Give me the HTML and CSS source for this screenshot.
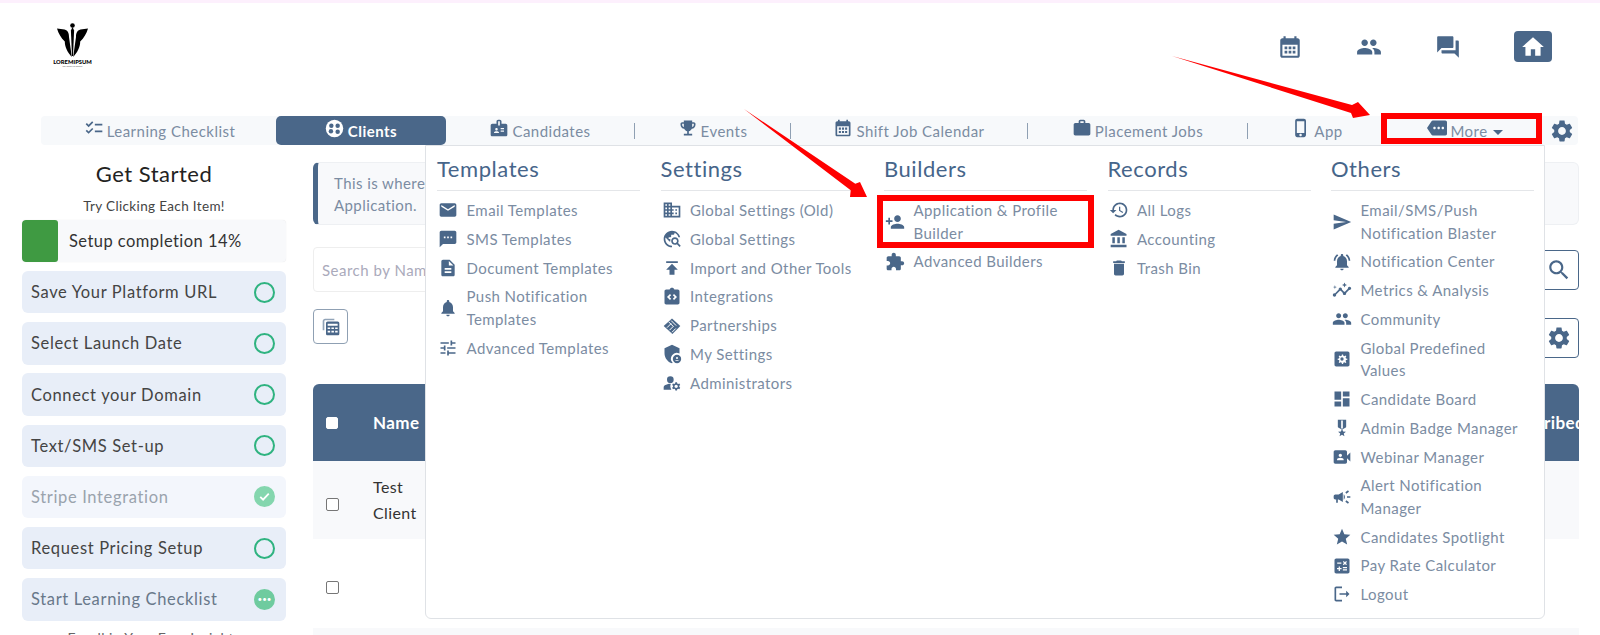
FILE: index.html
```html
<!DOCTYPE html>
<html lang="en">
<head>
<meta charset="utf-8">
<title>Clients</title>
<link rel="stylesheet" href="styles.css">
</head>
<body>
<svg class="defs" width="0" height="0" aria-hidden="true">
<symbol id="i-cal" viewBox="0 0 24 24"><path fill-rule="evenodd" d="M19 4h-1V2h-2v2H8V2H6v2H5C3.9 4 3 4.9 3 6v14c0 1.1.9 2 2 2h14c1.1 0 2-.9 2-2V6c0-1.100-.9-2-2-2zM19 20H5V10h14z"/><path d="M7 11.500h2.500V14H7zM10.750 11.500h2.500V14h-2.500zM14.500 11.500H17V14h-2.500zM7 15.500h2.500V18H7zM10.750 15.500h2.500V18h-2.500zM14.500 15.500H17V18h-2.500z"/></symbol>
<symbol id="i-people" viewBox="0 0 24 24"><path d="M16 11c1.660 0 2.990-1.340 2.990-3S17.660 5 16 5c-1.660 0-3 1.340-3 3s1.340 3 3 3zm-8 0c1.660 0 2.990-1.340 2.990-3S9.660 5 8 5C6.340 5 5 6.340 5 8s1.340 3 3 3zm0 2c-2.330 0-7 1.170-7 3.500V19h14v-2.500c0-2.330-4.670-3.500-7-3.500zm8 0c-.29 0-.62.02-.97.05 1.160.84 1.970 1.970 1.970 3.450V19h6v-2.500c0-2.330-4.670-3.500-7-3.500z"/></symbol>
<symbol id="i-forum" viewBox="0 0 24 24"><path d="M21 6h-2v9H6v2c0 .55.45 1 1 1h11l4 4V7c0-.55-.45-1-1-1zm-4 6V3c0-.55-.45-1-1-1H3c-.55 0-1 .45-1 1v14l4-4h10c.55 0 1-.45 1-1z"/></symbol>
<symbol id="i-home" viewBox="0 0 24 24"><path d="M10 20v-6h4v6h5v-8h3L12 3 2 12h3v8z"/></symbol>
<symbol id="i-gear" viewBox="0 0 24 24"><path d="M19.140 12.940c.04-.3.06-.61.06-.94 0-.32-.02-.64-.07-.94l2.030-1.580c.18-.14.23-.41.12-.61l-1.920-3.320c-.12-.22-.37-.29-.59-.22l-2.390.96c-.5-.38-1.030-.7-1.620-.94l-.36-2.540c-.04-.24-.24-.41-.48-.41h-3.840c-.24 0-.43.17-.47.41l-.36 2.540c-.59.24-1.130.57-1.620.94l-2.390-.96c-.22-.08-.47 0-.59.22L2.740 8.870c-.12.21-.08.47.12.61l2.030 1.580c-.05.3-.09.63-.09.94s.02.64.07.94l-2.030 1.580c-.18.14-.23.41-.12.61l1.920 3.320c.12.22.37.29.59.22l2.390-.96c.5.38 1.030.7 1.620.94l.36 2.540c.05.24.24.41.48.41h3.840c.24 0 .44-.17.47-.41l.36-2.540c.59-.24 1.130-.56 1.620-.94l2.390.96c.22.08.47 0 .59-.22l1.920-3.320c.12-.22.07-.47-.12-.61l-2.010-1.580zM12 15.600c-1.980 0-3.600-1.620-3.600-3.600s1.620-3.600 3.600-3.600 3.600 1.620 3.600 3.600-1.620 3.600-3.600 3.600z"/></symbol>
<symbol id="i-search" viewBox="0 0 24 24"><path d="M15.500 14h-.79l-.28-.27C15.410 12.590 16 11.110 16 9.500 16 5.910 13.090 3 9.500 3S3 5.910 3 9.500 5.910 16 9.500 16c1.610 0 3.090-.59 4.230-1.570l.27.28v.79l5 4.990L20.490 19l-4.990-5zm-6 0C7.010 14 5 11.990 5 9.500S7.010 5 9.500 5 14 7.010 14 9.500 11.990 14 9.500 14z"/></symbol>
<symbol id="i-email" viewBox="0 0 24 24"><path d="M20 4H4c-1.100 0-1.990.9-1.990 2L2 18c0 1.100.9 2 2 2h16c1.100 0 2-.9 2-2V6c0-1.100-.9-2-2-2zm0 4l-8 5-8-5V6l8 5 8-5v2z"/></symbol>
<symbol id="i-sms" viewBox="0 0 24 24"><path d="M20 2H4c-1.100 0-1.990.9-1.990 2L2 22l4-4h14c1.100 0 2-.9 2-2V4c0-1.100-.9-2-2-2zM9 11H7V9h2v2zm4 0h-2V9h2v2zm4 0h-2V9h2v2z"/></symbol>
<symbol id="i-doc" viewBox="0 0 24 24"><path d="M14 2H6c-1.100 0-1.990.9-1.990 2L4 20c0 1.100.89 2 1.990 2H18c1.100 0 2-.9 2-2V8l-6-6zm2 16H8v-2h8v2zm0-4H8v-2h8v2zm-3-5V3.500L18.500 9H13z"/></symbol>
<symbol id="i-bell" viewBox="0 0 24 24"><path d="M12 22c1.100 0 2-.9 2-2h-4c0 1.100.89 2 2 2zm6-6v-5c0-3.070-1.640-5.640-4.500-6.320V4c0-.83-.67-1.500-1.500-1.500s-1.500.67-1.500 1.500v.68C7.630 5.360 6 7.920 6 11v5l-2 2v1h16v-1l-2-2z"/></symbol>
<symbol id="i-tune" viewBox="0 0 24 24"><path d="M3 17v2h6v-2H3zM3 5v2h10V5H3zm10 16v-2h8v-2h-8v-2h-2v6h2zM7 9v2H3v2h4v2h2V9H7zm14 4v-2H11v2h10zm-6-4h2V7h4V5h-4V3h-2v6z"/></symbol>
<symbol id="i-domain" viewBox="0 0 24 24"><path d="M12 7V3H2v18h20V7H12zM6 19H4v-2h2v2zm0-4H4v-2h2v2zm0-4H4V9h2v2zm0-4H4V5h2v2zm4 12H8v-2h2v2zm0-4H8v-2h2v2zm0-4H8V9h2v2zm0-4H8V5h2v2zm10 12h-8v-2h2v-2h-2v-2h2v-2h-2V9h8v10zm-2-8h-2v2h2v-2zm0 4h-2v2h2v-2z"/></symbol>
<symbol id="i-explore" viewBox="0 0 24 24"><path d="M19.300 16.900c.4-.7.7-1.500.7-2.400 0-2.500-2-4.500-4.500-4.500S11 12 11 14.500s2 4.500 4.500 4.500c.9 0 1.700-.3 2.400-.7l3.200 3.200 1.400-1.400-3.200-3.200zm-3.800.1c-1.400 0-2.500-1.100-2.500-2.500s1.100-2.500 2.500-2.500 2.500 1.100 2.500 2.500-1.100 2.500-2.500 2.500zM12 20v2C6.480 22 2 17.520 2 12S6.480 2 12 2c4.840 0 8.870 3.440 9.800 8h-2.070c-.64-2.460-2.400-4.470-4.730-5.410V5c0 1.100-.9 2-2 2h-2v2c0 .55-.45 1-1 1H8v2h2v3H9l-4.790-4.790C4.080 10.790 4 11.380 4 12c0 4.410 3.590 8 8 8z"/></symbol>
<symbol id="i-publish" viewBox="0 0 24 24"><path d="M5 4v2h14V4H5zm0 10h4v6h6v-6h4l-7-7-7 7z"/></symbol>
<symbol id="i-integr" viewBox="0 0 24 24"><path d="M19 3h-4.180C14.400 1.840 13.300 1 12 1s-2.400.84-2.820 2H5c-1.100 0-2 .9-2 2v14c0 1.100.9 2 2 2h14c1.100 0 2-.9 2-2V5c0-1.100-.9-2-2-2zM11 14.170l-1.410 1.420L6 12l3.590-3.590L11 9.830 8.830 12 11 14.170zm3.410 1.420L13 14.170 15.170 12 13 9.830l1.410-1.420L18 12l-3.590 3.590z"/></symbol>
<symbol id="i-hands" viewBox="0 0 24 24"><path d="M12 3l10 9-9.500 9.500L2 12z"/><path class="cut" d="M8 7l5 5M11 5.500l6 6M6 14l5-5M9 17l5-5M12 19.500l4.500-4.500"/></symbol>
<symbol id="i-admin" viewBox="0 0 24 24"><path d="M12 1L3 5v6c0 5.550 3.840 10.740 9 12 .3-.07.6-.16.9-.27A7 7 0 0 1 21 11.500V5z"/><circle cx="18" cy="18" r="5"/><circle class="hole" cx="18" cy="16.800" r="1.200"/><path class="hole" d="M15.500 20.500c.5-1.200 4.500-1.200 5 0z"/></symbol>
<symbol id="i-manage" viewBox="0 0 24 24"><circle cx="10" cy="8" r="4"/><path d="M10.670 13.020c-.22-.01-.44-.02-.67-.02-2.420 0-4.680.67-6.610 1.820-.88.52-1.390 1.500-1.390 2.530V20h9.260c-.79-1.130-1.260-2.510-1.260-4 0-1.070.25-2.070.67-2.980zM20.750 16c0-.22-.03-.42-.06-.63l1.140-1.010-1-1.730-1.450.49c-.32-.27-.68-.48-1.080-.63L18 11h-2l-.3 1.490c-.4.15-.76.36-1.080.63l-1.450-.49-1 1.730 1.140 1.010c-.03.21-.06.41-.06.63s.03.42.06.63l-1.140 1.010 1 1.730 1.450-.49c.32.27.68.48 1.080.63L16 21h2l.3-1.490c.4-.15.76-.36 1.080-.63l1.450.49 1-1.730-1.140-1.010c.03-.21.06-.41.06-.63zM17 18c-1.100 0-2-.9-2-2s.9-2 2-2 2 .9 2 2-.9 2-2 2z"/></symbol>
<symbol id="i-padd" viewBox="0 0 24 24"><path d="M15 12c2.210 0 4-1.790 4-4s-1.790-4-4-4-4 1.790-4 4 1.790 4 4 4zm-9-2V7H4v3H1v2h3v3h2v-3h3v-2H6zm9 4c-2.670 0-8 1.340-8 4v2h16v-2c0-2.660-5.330-4-8-4z"/></symbol>
<symbol id="i-ext" viewBox="0 0 24 24"><path d="M20.500 11H19V7c0-1.100-.9-2-2-2h-4V3.500C13 2.120 11.880 1 10.500 1S8 2.120 8 3.500V5H4c-1.100 0-1.990.9-1.990 2v3.800H3.500c1.490 0 2.700 1.210 2.700 2.700s-1.210 2.700-2.700 2.700H2V20c0 1.100.9 2 2 2h3.800v-1.500c0-1.490 1.210-2.700 2.700-2.700 1.490 0 2.700 1.210 2.700 2.700V22H17c1.100 0 2-.9 2-2v-4h1.500c1.380 0 2.500-1.120 2.500-2.500S21.880 11 20.500 11z"/></symbol>
<symbol id="i-history" viewBox="0 0 24 24"><path d="M13 3c-4.970 0-9 4.030-9 9H1l3.890 3.890.07.14L9 12H6c0-3.870 3.130-7 7-7s7 3.130 7 7-3.130 7-7 7c-1.930 0-3.680-.79-4.940-2.060l-1.420 1.420C8.270 19.990 10.510 21 13 21c4.970 0 9-4.030 9-9s-4.030-9-9-9zm-1 5v5l4.280 2.540.72-1.210-3.500-2.080V8H12z"/></symbol>
<symbol id="i-bank" viewBox="0 0 24 24"><path d="M4 10v7h3v-7H4zm6 0v7h3v-7h-3zM2 22h19v-3H2v3zm14-12v7h3v-7h-3zm-4.500-9L2 6v2h19V6l-9.500-5z"/></symbol>
<symbol id="i-trash" viewBox="0 0 24 24"><path d="M6 19c0 1.100.9 2 2 2h8c1.100 0 2-.9 2-2V7H6v12zM19 4h-3.500l-1-1h-5l-1 1H5v2h14V4z"/></symbol>
<symbol id="i-send" viewBox="0 0 24 24"><path d="M2.010 21L23 12 2.010 3 2 10l15 2-15 2z"/></symbol>
<symbol id="i-bella" viewBox="0 0 24 24"><path d="M7.580 4.080L6.150 2.650C3.750 4.480 2.170 7.300 2.030 10.500h2c.15-2.650 1.510-4.970 3.550-6.420zm12.390 6.420h2c-.15-3.200-1.730-6.020-4.120-7.850l-1.420 1.430c2.020 1.450 3.390 3.770 3.540 6.420zM18 11c0-3.070-1.640-5.640-4.500-6.320V4c0-.83-.67-1.500-1.500-1.500s-1.500.67-1.500 1.500v.68C7.630 5.360 6 7.920 6 11v5l-2 2v1h16v-1l-2-2v-5zm-6 11c.14 0 .27-.01.4-.04.65-.14 1.180-.58 1.440-1.180.1-.24.15-.5.15-.78h-4c.01 1.100.9 2 2.010 2z"/></symbol>
<symbol id="i-insights" viewBox="0 0 24 24"><path d="M21 8c-1.450 0-2.260 1.440-1.930 2.510l-3.550 3.560c-.3-.09-.74-.09-1.040 0l-2.550-2.550C12.270 10.450 11.460 9 10 9c-1.450 0-2.270 1.440-1.930 2.520l-4.560 4.550C2.440 15.740 1 16.550 1 18c0 1.100.9 2 2 2 1.450 0 2.260-1.440 1.930-2.510l4.550-4.560c.3.09.74.09 1.040 0l2.550 2.550C12.730 16.550 13.540 18 15 18c1.450 0 2.270-1.440 1.930-2.520l3.560-3.550c1.070.33 2.510-.48 2.510-1.930 0-1.100-.9-2-2-2z"/><path d="M15 9l.94-2.070L18 6l-2.060-.93L15 3l-.92 2.070L12 6l2.080.93zM3.500 11L4 9l2-.5L4 8l-.5-2L3 8l-2 .5L3 9z"/></symbol>
<symbol id="i-apps" viewBox="0 0 24 24"><path fill-rule="evenodd" d="M19 3H5C3.890 3 3 3.900 3 5v14c0 1.100.89 2 2 2h14c1.110 0 2-.9 2-2V5c0-1.100-.89-2-2-2zM12 6.500l1.300.0.3 1.600 1.200.5 1.400-.9 1 1-.9 1.400.5 1.200 1.600.3v1.400l-1.600.3-.5 1.200.9 1.400-1 1-1.400-.9-1.200.5-.3 1.600h-1.400l-.3-1.600-1.200-.5-1.400.9-1-1 .9-1.400-.5-1.200-1.600-.3v-1.400l1.600-.3.5-1.200-.9-1.400 1-1 1.400.9 1.200-.5.3-1.600zM12 10a2 2 0 1 0 0 4 2 2 0 0 0 0-4z"/></symbol>
<symbol id="i-dash" viewBox="0 0 24 24"><path d="M3 13h8V3H3v10zm0 8h8v-6H3v6zm10 0h8V11h-8v10zm0-18v6h8V3h-8z"/></symbol>
<symbol id="i-medal" viewBox="0 0 24 24"><path d="M17 10.430V2H7v8.430c0 .35.18.68.49.86l4.180 2.510-.99 2.340-3.410.29 2.590 2.240L9.070 22 12 20.230 14.930 22l-.78-3.330 2.590-2.240-3.410-.29-.99-2.340 4.180-2.510c.3-.18.48-.5.48-.86zm-4 1.800l-1 .6-1-.6V3h2v9.230z"/></symbol>
<symbol id="i-video" viewBox="0 0 24 24"><path d="M18 10.480V6c0-1.100-.9-2-2-2H4c-1.100 0-2 .9-2 2v12c0 1.100.9 2 2 2h12c1.100 0 2-.9 2-2v-4.480l4 3.980v-11l-4 3.980zM10 8c1.100 0 2 .9 2 2s-.9 2-2 2-2-.9-2-2 .9-2 2-2zm4 8H6v-.57c0-.81.48-1.530 1.220-1.850.85-.37 1.790-.58 2.780-.58.99 0 1.930.21 2.780.58.74.32 1.220 1.040 1.220 1.850V16z"/></symbol>
<symbol id="i-camp" viewBox="0 0 24 24"><path d="M18 11v2h4v-2h-4zm-2 6.610c.96.71 2.210 1.650 3.200 2.390.4-.53.8-1.070 1.200-1.600-.99-.74-2.240-1.680-3.200-2.400-.4.54-.8 1.080-1.200 1.610zM20.400 5.600c-.4-.53-.8-1.070-1.200-1.600-.99.74-2.240 1.680-3.200 2.400.4.53.8 1.070 1.200 1.600.96-.72 2.210-1.650 3.200-2.400zM4 9c-1.100 0-2 .9-2 2v2c0 1.100.9 2 2 2h1v4h2v-4h1l5 3V6L8 9H4zm11.500 3c0-1.330-.58-2.530-1.500-3.350v6.690c.92-.81 1.500-2.010 1.500-3.340z"/></symbol>
<symbol id="i-star" viewBox="0 0 24 24"><path d="M12 17.270L18.180 21l-1.640-7.030L22 9.240l-7.190-.61L12 2 9.190 8.630 2 9.240l5.460 4.730L5.820 21z"/></symbol>
<symbol id="i-calc" viewBox="0 0 24 24"><path d="M19 3H5c-1.100 0-2 .9-2 2v14c0 1.100.9 2 2 2h14c1.100 0 2-.9 2-2V5c0-1.100-.9-2-2-2zm-5.970 4.060L14.090 6l1.410 1.410L16.910 6l1.060 1.060-1.410 1.410 1.410 1.410-1.060 1.060-1.410-1.400-1.410 1.410-1.060-1.060 1.410-1.410-1.410-1.420zm-6.780.66h5v1.500h-5v-1.500zM11.500 16h-2v2H8v-2H6v-1.500h2v-2h1.500v2h2V16zm6.500 1.250h-5v-1.500h5v1.500zm0-2.500h-5v-1.500h5v1.500z"/></symbol>
<symbol id="i-logout" viewBox="0 0 24 24"><path d="M5 5h7V3H5c-1.100 0-2 .9-2 2v14c0 1.100.9 2 2 2h7v-2H5V5zm16 7l-4-4v3H9v2h8v3l4-4z"/></symbol>
<symbol id="i-check" viewBox="0 0 24 24"><path d="M22 7h-9v2h9V7zm0 8h-9v2h9v-2zM5.540 11L2 7.460l1.410-1.410 2.120 2.120 4.240-4.240 1.410 1.410L5.540 11zm0 8L2 15.460l1.410-1.410 2.120 2.120 4.240-4.240 1.410 1.410L5.540 19z"/></symbol>
<symbol id="i-badge" viewBox="0 0 24 24"><path d="M20 7h-5V4c0-1.100-.9-2-2-2h-2c-1.100 0-2 .9-2 2v3H4c-1.100 0-2 .9-2 2v11c0 1.100.9 2 2 2h16c1.100 0 2-.9 2-2V9c0-1.100-.9-2-2-2zM9 12c.83 0 1.500.67 1.500 1.500S9.830 15 9 15s-1.500-.67-1.500-1.500S8.170 12 9 12zm3 6H6v-.75c0-1 2-1.500 3-1.500s3 .5 3 1.500V18zm1-9h-2V4h2v5zm5 7.500h-4V15h4v1.500zm0-3h-4V12h4v1.500z"/></symbol>
<symbol id="i-trophy" viewBox="0 0 24 24"><path d="M19 5h-2V3H7v2H5c-1.100 0-2 .9-2 2v1c0 2.550 1.920 4.630 4.390 4.940.63 1.500 1.980 2.630 3.610 2.960V19H7v2h10v-2h-4v-3.100c1.630-.33 2.980-1.460 3.610-2.960C19.080 12.630 21 10.550 21 8V7c0-1.100-.9-2-2-2zM5 8V7h2v3.820C5.840 10.400 5 9.300 5 8zm14 0c0 1.300-.84 2.400-2 2.820V7h2v1z"/></symbol>
<symbol id="i-work" viewBox="0 0 24 24"><path d="M20 6h-4V4c0-1.110-.89-2-2-2h-4c-1.110 0-2 .89-2 2v2H4c-1.110 0-1.990.89-1.990 2L2 19c0 1.110.89 2 2 2h16c1.110 0 2-.89 2-2V8c0-1.110-.89-2-2-2zm-6 0h-4V4h4v2z"/></symbol>
<symbol id="i-phone" viewBox="0 0 24 24"><path d="M15.500 1h-8C6.120 1 5 2.120 5 3.500v17C5 21.880 6.120 23 7.500 23h8c1.380 0 2.500-1.120 2.500-2.500v-17C18 2.120 16.880 1 15.500 1zm-4 21c-.83 0-1.500-.67-1.500-1.500s.67-1.500 1.500-1.500 1.500.67 1.500 1.500-.67 1.500-1.500 1.500zm4.500-4H7V4h9v14z"/></symbol>
<symbol id="i-more" viewBox="0 0 24 24"><path d="M22 3H7c-.69 0-1.230.35-1.590.88L0 12l5.410 8.110c.36.53.9.89 1.590.89h15c1.100 0 2-.9 2-2V5c0-1.100-.9-2-2-2zM9 13.500c-.83 0-1.500-.67-1.500-1.500s.67-1.500 1.500-1.500 1.500.67 1.500 1.500-.67 1.500-1.500 1.500zm5 0c-.83 0-1.500-.67-1.500-1.500s.67-1.500 1.500-1.500 1.500.67 1.500 1.500-.67 1.500-1.500 1.500zm5 0c-.83 0-1.500-.67-1.500-1.500s.67-1.500 1.500-1.500 1.500.67 1.500 1.500-.67 1.500-1.500 1.500z"/></symbol>
<symbol id="i-client" viewBox="0 0 24 24"><circle cx="12" cy="12" r="11" fill="#fff"/><circle class="dot" cx="8" cy="8.500" r="2.800"/><circle class="dot" cx="16" cy="8.500" r="2.800"/><circle class="dot" cx="7.500" cy="15.500" r="2.800"/><circle class="dot" cx="16" cy="16" r="2.800"/></symbol>
<symbol id="i-table" viewBox="0 0 24 24"><path class="back" d="M2 16V5c0-1.700 1.300-3 3-3h11v2H5c-.6 0-1 .4-1 1v11z"/><path fill-rule="evenodd" d="M8 5.500h12c1.100 0 2 .9 2 2V20c0 1.100-.9 2-2 2H8c-1.100 0-2-.9-2-2V7.500c0-1.100.9-2 2-2zM8 8v2.500h12V8zM8 12.500v2h3v-2zM12.500 12.500v2h3v-2zM17 12.500v2h3v-2zM8 16.500v2h3v-2zM12.500 16.500v2h3v-2zM17 16.500v2h3v-2z"/></symbol>
</svg>

<div class="page">
  <header class="header">
    <div class="logo">
      <svg class="logo-mark" viewBox="0 0 32 37" width="32" height="37">
        <circle cx="15.500" cy="2.500" r="2.300"/>
        <path d="M15.500 4l1.600 3.500-1.100 25.500h-1L13.900 7.500z"/>
        <path d="M0 5.500l7.500 1c3.500 1 4.500 3.500 4.500 7.500l2.800 20c-4-4.500-7-9.500-7-15.500C4 15 1.500 10.500 0 5.500z"/>
        <path d="M31 5.500l-7.500 1c-3.500 1-4.500 3.500-4.500 7.500l-2.800 20c4-4.500 7-9.500 7-15.500C27 15 29.500 10.500 31 5.500z"/>
      </svg>
      <span class="logo-name">LOREMIPSUM</span>
      <span class="logo-sub">CONSULTING GROUP</span>
    </div>
    <div class="header-icons">
      <svg class="hicon"><use href="#i-cal"/></svg>
      <svg class="hicon"><use href="#i-people"/></svg>
      <svg class="hicon"><use href="#i-forum"/></svg>
      <span class="home-btn"><svg class="hicon home"><use href="#i-home"/></svg></span>
    </div>
  </header>

  <nav class="nav">
    <a class="tab tab-first"><svg class="nicon"><use href="#i-check"/></svg>Learning Checklist</a>
    <a class="tab active"><svg class="nicon client"><use href="#i-client"/></svg>Clients</a>
    <a class="tab sep"><svg class="nicon"><use href="#i-badge"/></svg>Candidates</a>
    <a class="tab sep"><svg class="nicon"><use href="#i-trophy"/></svg>Events</a>
    <a class="tab sep"><svg class="nicon"><use href="#i-cal"/></svg>Shift Job Calendar</a>
    <a class="tab sep"><svg class="nicon"><use href="#i-work"/></svg>Placement Jobs</a>
    <a class="tab tab-app"><svg class="nicon"><use href="#i-phone"/></svg>App</a>
    <a class="tab tab-more"><svg class="nicon"><use href="#i-more"/></svg>More<span class="caret"></span></a>
    <a class="tab gear"><svg class="hicon"><use href="#i-gear"/></svg></a>
  </nav>

  <div class="content">
    <aside class="panel">
      <h2 class="panel-title">Get Started</h2>
      <p class="panel-sub">Try Clicking Each Item!</p>
      <div class="progress"><span class="progress-fill"></span><span class="progress-label">Setup completion 14%</span></div>
      <ul class="steps">
        <li class="step">Save Your Platform URL<span class="status"></span></li>
        <li class="step">Select Launch Date<span class="status"></span></li>
        <li class="step">Connect your Domain<span class="status"></span></li>
        <li class="step">Text/SMS Set-up<span class="status"></span></li>
        <li class="step done">Stripe Integration<span class="status filled"><svg viewBox="0 0 24 24" class="status-icon"><path d="M6 12.500l4 4 8-8.500" /></svg></span></li>
        <li class="step">Request Pricing Setup<span class="status"></span></li>
        <li class="step muted">Start Learning Checklist<span class="status busy">•••</span></li>
      </ul>
      <p class="panel-foot">Enroll in Your Free Insights</p>
    </aside>

    <main class="main">
      <div class="alert">This is where<br>Application.</div>
      <div class="search-row">
        <input class="search" type="text" placeholder="Search by Name">
        <button class="icon-btn search-btn"><svg class="hicon"><use href="#i-search"/></svg></button>
      </div>
      <div class="toolbar">
        <button class="icon-btn table-btn"><svg class="ticon"><use href="#i-table"/></svg></button>
        <button class="icon-btn gear-btn"><svg class="hicon"><use href="#i-gear"/></svg></button>
      </div>
      <div class="table">
        <div class="row head"><span class="cell-check"><span class="box white"></span></span><span class="cell-name">Name</span><span class="cell-last">Subscribed</span></div>
        <div class="row one"><span class="cell-check"><span class="box"></span></span><span class="cell-name">Test<br>Client</span></div>
        <div class="row two"><span class="cell-check"><span class="box"></span></span></div>
        <div class="row three"></div>
      </div>
    </main>
  </div>

  <section class="menu">
    <div class="mcol">
      <h3 class="mhead">Templates</h3>
      <a class="mitem"><svg class="micon"><use href="#i-email"/></svg><span>Email Templates</span></a>
      <a class="mitem"><svg class="micon"><use href="#i-sms"/></svg><span>SMS Templates</span></a>
      <a class="mitem"><svg class="micon"><use href="#i-doc"/></svg><span>Document Templates</span></a>
      <a class="mitem"><svg class="micon"><use href="#i-bell"/></svg><span>Push Notification Templates</span></a>
      <a class="mitem"><svg class="micon"><use href="#i-tune"/></svg><span>Advanced Templates</span></a>
    </div>
    <div class="mcol">
      <h3 class="mhead">Settings</h3>
      <a class="mitem"><svg class="micon"><use href="#i-domain"/></svg><span>Global Settings (Old)</span></a>
      <a class="mitem"><svg class="micon"><use href="#i-explore"/></svg><span>Global Settings</span></a>
      <a class="mitem"><svg class="micon"><use href="#i-publish"/></svg><span>Import and Other Tools</span></a>
      <a class="mitem"><svg class="micon"><use href="#i-integr"/></svg><span>Integrations</span></a>
      <a class="mitem"><svg class="micon"><use href="#i-hands"/></svg><span>Partnerships</span></a>
      <a class="mitem"><svg class="micon"><use href="#i-admin"/></svg><span>My Settings</span></a>
      <a class="mitem"><svg class="micon"><use href="#i-manage"/></svg><span>Administrators</span></a>
    </div>
    <div class="mcol">
      <h3 class="mhead">Builders</h3>
      <a class="mitem"><svg class="micon"><use href="#i-padd"/></svg><span>Application &amp; Profile Builder</span></a>
      <a class="mitem"><svg class="micon"><use href="#i-ext"/></svg><span>Advanced Builders</span></a>
    </div>
    <div class="mcol">
      <h3 class="mhead">Records</h3>
      <a class="mitem"><svg class="micon"><use href="#i-history"/></svg><span>All Logs</span></a>
      <a class="mitem"><svg class="micon"><use href="#i-bank"/></svg><span>Accounting</span></a>
      <a class="mitem"><svg class="micon"><use href="#i-trash"/></svg><span>Trash Bin</span></a>
    </div>
    <div class="mcol">
      <h3 class="mhead">Others</h3>
      <a class="mitem"><svg class="micon"><use href="#i-send"/></svg><span>Email/SMS/Push Notification Blaster</span></a>
      <a class="mitem"><svg class="micon"><use href="#i-bella"/></svg><span>Notification Center</span></a>
      <a class="mitem"><svg class="micon"><use href="#i-insights"/></svg><span>Metrics &amp; Analysis</span></a>
      <a class="mitem"><svg class="micon"><use href="#i-people"/></svg><span>Community</span></a>
      <a class="mitem"><svg class="micon"><use href="#i-apps"/></svg><span>Global Predefined Values</span></a>
      <a class="mitem"><svg class="micon"><use href="#i-dash"/></svg><span>Candidate Board</span></a>
      <a class="mitem"><svg class="micon"><use href="#i-medal"/></svg><span>Admin Badge Manager</span></a>
      <a class="mitem"><svg class="micon"><use href="#i-video"/></svg><span>Webinar Manager</span></a>
      <a class="mitem"><svg class="micon"><use href="#i-camp"/></svg><span>Alert Notification Manager</span></a>
      <a class="mitem"><svg class="micon"><use href="#i-star"/></svg><span>Candidates Spotlight</span></a>
      <a class="mitem"><svg class="micon"><use href="#i-calc"/></svg><span>Pay Rate Calculator</span></a>
      <a class="mitem"><svg class="micon"><use href="#i-logout"/></svg><span>Logout</span></a>
    </div>
  </section>

  <div class="mark mark-more"></div>
  <div class="mark mark-builder"></div>
  <svg class="arrows" viewBox="0 0 1600 635" width="1600" height="635">
    <path d="M1172 56L1352 105 1358 102 1370 115 1353 118 1351 113z"/>
    <path d="M744 109L855.300 183.800 860 182 867 197 850 197 850.700 190.200z"/>
  </svg>
</div>
</body>
</html>
```

FILE: styles.css
```css
* { box-sizing: border-box; }
html, body { margin: 0; padding: 0; }
body {
  font-family: "Lato", "Open Sans", sans-serif;
  background: #fff;
  color: #333;
  width: 1600px;
  height: 635px;
  overflow: hidden;
}
.defs { position: absolute; }
.page {
  position: relative;
  width: 1600px;
  height: 635px;
  overflow: hidden;
  border-top: 3px solid #fdf0fd;
}
svg { fill: #4a6789; display: block; flex: none; }

/* header */
.header { height: 113px; display: flex; justify-content: space-between; padding: 20px 48px 0 55px; }
.logo { width: 35px; display: flex; flex-direction: column; align-items: center; }
.logo-mark { fill: #000; }
.logo-name { font-size: 5.800px; font-weight: 900; color: #000; line-height: 7px; margin-top: -2px; white-space: nowrap; }
.logo-sub { font-size: 2px; line-height: 3px; color: #555; white-space: nowrap; }
.header-icons { display: flex; gap: 41px; height: 31px; margin-top: 8px; align-items: center; }
.hicon { width: 26px; height: 26px; }
.header-icons > .hicon { margin: 0 6px; }
.home-btn { width: 38px; height: 31px; background: #4a6789; border-radius: 4px; display: flex; align-items: center; justify-content: center; margin-left: 6px; }
.hicon.home { fill: #fff; }

/* nav */
.nav {
  margin-left: 41px;
  width: 1537px;
  height: 29px;
  background: #f7f9fb;
  border-radius: 4px;
  display: grid;
  grid-template-columns: 235px 170px 189px 156px 237px 220px 134px 160px 36px;
  align-items: center;
  font-size: 15px;
  letter-spacing: .48px;
  color: #7b8ca2;
}
.tab { display: flex; align-items: center; justify-content: center; height: 100%; white-space: nowrap; }
.tab.sep { height: 16px; border-right: 1px solid #8fa0b3; }
.tab.active { background: #4a6789; color: #fff; font-weight: 700; border-radius: 5px; }
.tab-first { padding-left: 2px; }
.tab-app { padding-left: 4px; }
.tab-more { padding-left: 6px; }
.nicon { width: 20px; height: 20px; margin: -5px 3px 0 0; }
.nicon.client { margin-right: 4px; width: 19px; height: 19px; }
.dot { fill: #4a6789; }
.caret { width: 0; height: 0; border: 5px solid transparent; border-top-color: #4a6789; border-bottom: 0; margin: 3px 0 0 5px; }
.tab.gear { justify-content: flex-start; padding-left: 7px; }

/* content */
.content { display: flex; padding-left: 22px; }
.panel { width: 264px; flex: none; }
.panel-title { margin: 14px 0 0; font-size: 22px; font-weight: 400; line-height: 30px; text-align: center; color: #222; letter-spacing: .5px; }
.panel-sub { margin: 7px 0 4px; font-size: 13.500px; line-height: 20px; text-align: center; color: #444; letter-spacing: .35px; }
.progress { display: flex; align-items: center; height: 42px; background: #f8f9fb; border-radius: 4px; overflow: hidden; box-shadow: 0 0 1px #ddd; font-size: 16.500px; color: #333; letter-spacing: .45px; }
.progress-fill { width: 36px; height: 100%; background: #3f9a42; border-radius: 3px; }
.progress-label { margin-left: 11px; }
.steps { list-style: none; margin: 9px 0 0; padding: 0; display: flex; flex-direction: column; gap: 8.800px; }
.step { height: 42.400px; background: #e8eef8; border-radius: 6px; display: flex; justify-content: space-between; align-items: center; padding: 0 11px 0 9px; font-size: 16.500px; letter-spacing: .65px; color: #444; }
.step.done { background: #f3f6fc; color: #9aa3ad; }
.step.muted { color: #68788a; }
.status { width: 21px; height: 21px; border: 2px solid #2fb380; border-radius: 50%; display: flex; align-items: center; justify-content: center; }
.status.filled { background: #84d6ae; border-color: #84d6ae; }
.status-icon { fill: none; stroke: #fff; stroke-width: 2.500; width: 17px; height: 17px; }
.status.busy { background: #6fcb9f; border-color: #6fcb9f; color: #fff; font-size: 8px; letter-spacing: 0; }
.panel-foot { margin: 8px 0 0; font-size: 14px; text-align: center; color: #666; letter-spacing: .4px; }

.main { width: 1266px; margin-left: 27px; flex: none; }
.alert { margin-top: 17px; height: 63px; background: #f8f9fb; border: 1px solid #eef0f3; border-left: 5px solid #4a6789; border-radius: 6px; padding: 9px 16px; font-size: 15px; line-height: 22px; color: #7b8ca2; letter-spacing: .42px; }
.search-row { margin-top: 22px; height: 45px; display: flex; align-items: center; justify-content: space-between; }
.search { width: 1000px; height: 45px; border: 1px solid #eee; border-radius: 4px; padding: 0 8px; font: 15px "Lato", sans-serif; letter-spacing: .5px; outline: none; }
.search::placeholder { color: #aab; }
.icon-btn { background: #fff; border: 1px solid #4a6789; border-radius: 4px; display: flex; align-items: center; justify-content: center; padding: 0; }
.search-btn { width: 44px; height: 40px; padding-left: 3px; }
.toolbar { margin-top: 17px; height: 75px; display: flex; justify-content: space-between; align-items: flex-start; }
.table-btn { width: 35px; height: 35px; border-color: #8fa0b3; }
.ticon { width: 20px; height: 20px; }
.back { opacity: .6; }
.gear-btn { width: 44px; height: 40px; margin-top: 9px; padding-left: 3px; }
.table { overflow: hidden; }
.row { display: flex; align-items: center; overflow: hidden; font-size: 16px; color: #333; letter-spacing: .4px; line-height: 26px; }
.head { height: 77px; background: #4a6789; border-radius: 6px 6px 0 0; color: #fff; font-weight: 700; font-size: 17px; }
.one { height: 78px; background: #f8f9fb; }
.two { height: 89px; }
.three { height: 20px; background: #f8f9fb; }
.cell-check { width: 60px; padding-left: 13px; flex: none; }
.one .cell-check, .two .cell-check { padding-top: 8px; }
.box { display: block; width: 13px; height: 13px; border: 1px solid #767676; border-radius: 2px; background: #fff; }
.box.white { border-color: #fff; width: 12px; height: 12px; }
.cell-last { margin-left: auto; margin-right: -6px; }

/* mega menu */
.menu {
  position: absolute;
  left: 425px;
  top: 142px;
  width: 1120px;
  height: 474px;
  background: #fff;
  border: 1px solid #dfe2e6;
  border-radius: 0 0 6px 6px;
  padding: 8px 0 0 11px;
  display: grid;
  grid-template-columns: repeat(5, 223.500px);
  align-content: start;
}
.mcol { width: 203px; }
.mhead { margin: 0 0 5px; height: 37px; line-height: 30px; font-size: 22px; font-weight: 400; color: #46658a; border-bottom: 1px solid #e4e6e9; letter-spacing: .55px; }
.mitem { display: flex; align-items: center; padding: 3.150px 0; font-size: 15px; line-height: 22.500px; color: #7b8ca2; letter-spacing: .42px; }
.micon { width: 20px; height: 20px; margin: 0 8.500px 0 1px; }
.cut { fill: none; stroke: #fff; stroke-width: 1.200; }
.hole { fill: #fff; }

/* annotations */
.mark { position: absolute; border: 6px solid #f00; }
.mark-more { left: 1381px; top: 110px; width: 161px; height: 31px; }
.mark-builder { left: 877px; top: 192px; width: 217px; height: 53px; }
.arrows { position: absolute; left: 0; top: -3px; fill: #f00; pointer-events: none; }
```
